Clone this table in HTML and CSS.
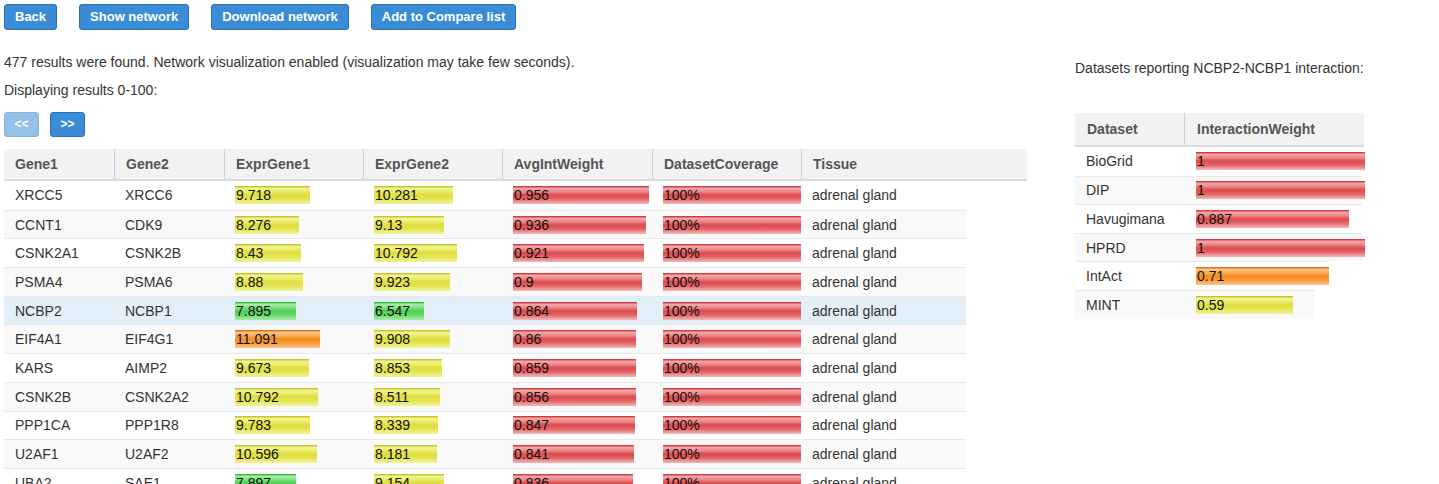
FILE: index.html
```html
<!DOCTYPE html>
<html>
<head>
<meta charset="utf-8">
<link rel="stylesheet" href="styles.css">
</head>
<body>
<div class="page">
  <div class="main">
    <div class="toolbar">
      <button class="btn">Back</button>
      <button class="btn">Show network</button>
      <button class="btn">Download network</button>
      <button class="btn">Add to Compare list</button>
    </div>
    <p class="info first">477 results were found. Network visualization enabled (visualization may take few seconds).</p>
    <p class="info">Displaying results 0-100:</p>
    <div class="pager">
      <button class="btn btn-sm disabled">&lt;&lt;</button>
      <button class="btn btn-sm">&gt;&gt;</button>
    </div>
    <div class="grid">
      <div class="thead">
        <div class="th">Gene1</div>
        <div class="th">Gene2</div>
        <div class="th">ExprGene1</div>
        <div class="th">ExprGene2</div>
        <div class="th">AvgIntWeight</div>
        <div class="th">DatasetCoverage</div>
        <div class="th">Tissue</div>
      </div>
      <div class="tbody">
        <div class="tr">
          <div class="td">XRCC5</div><div class="td">XRCC6</div>
          <div class="td"><div class="bar yellow" style="width:75px">9.718</div></div>
          <div class="td"><div class="bar yellow" style="width:79px">10.281</div></div>
          <div class="td"><div class="bar red" style="width:136px">0.956</div></div>
          <div class="td"><div class="bar red" style="width:138px">100%</div></div>
          <div class="td">adrenal gland</div>
        </div>
        <div class="tr">
          <div class="td">CCNT1</div><div class="td">CDK9</div>
          <div class="td"><div class="bar yellow" style="width:64px">8.276</div></div>
          <div class="td"><div class="bar yellow" style="width:70px">9.13</div></div>
          <div class="td"><div class="bar red" style="width:133px">0.936</div></div>
          <div class="td"><div class="bar red" style="width:138px">100%</div></div>
          <div class="td">adrenal gland</div>
        </div>
        <div class="tr">
          <div class="td">CSNK2A1</div><div class="td">CSNK2B</div>
          <div class="td"><div class="bar yellow" style="width:66px">8.43</div></div>
          <div class="td"><div class="bar yellow" style="width:83px">10.792</div></div>
          <div class="td"><div class="bar red" style="width:131px">0.921</div></div>
          <div class="td"><div class="bar red" style="width:138px">100%</div></div>
          <div class="td">adrenal gland</div>
        </div>
        <div class="tr">
          <div class="td">PSMA4</div><div class="td">PSMA6</div>
          <div class="td"><div class="bar yellow" style="width:68px">8.88</div></div>
          <div class="td"><div class="bar yellow" style="width:76px">9.923</div></div>
          <div class="td"><div class="bar red" style="width:129px">0.9</div></div>
          <div class="td"><div class="bar red" style="width:138px">100%</div></div>
          <div class="td">adrenal gland</div>
        </div>
        <div class="tr selected">
          <div class="td">NCBP2</div><div class="td">NCBP1</div>
          <div class="td"><div class="bar green" style="width:61px">7.895</div></div>
          <div class="td"><div class="bar green" style="width:50px">6.547</div></div>
          <div class="td"><div class="bar red" style="width:124px">0.864</div></div>
          <div class="td"><div class="bar red" style="width:138px">100%</div></div>
          <div class="td">adrenal gland</div>
        </div>
        <div class="tr">
          <div class="td">EIF4A1</div><div class="td">EIF4G1</div>
          <div class="td"><div class="bar orange" style="width:85px">11.091</div></div>
          <div class="td"><div class="bar yellow" style="width:76px">9.908</div></div>
          <div class="td"><div class="bar red" style="width:123px">0.86</div></div>
          <div class="td"><div class="bar red" style="width:138px">100%</div></div>
          <div class="td">adrenal gland</div>
        </div>
        <div class="tr">
          <div class="td">KARS</div><div class="td">AIMP2</div>
          <div class="td"><div class="bar yellow" style="width:74px">9.673</div></div>
          <div class="td"><div class="bar yellow" style="width:68px">8.853</div></div>
          <div class="td"><div class="bar red" style="width:123px">0.859</div></div>
          <div class="td"><div class="bar red" style="width:138px">100%</div></div>
          <div class="td">adrenal gland</div>
        </div>
        <div class="tr">
          <div class="td">CSNK2B</div><div class="td">CSNK2A2</div>
          <div class="td"><div class="bar yellow" style="width:83px">10.792</div></div>
          <div class="td"><div class="bar yellow" style="width:66px">8.511</div></div>
          <div class="td"><div class="bar red" style="width:123px">0.856</div></div>
          <div class="td"><div class="bar red" style="width:138px">100%</div></div>
          <div class="td">adrenal gland</div>
        </div>
        <div class="tr">
          <div class="td">PPP1CA</div><div class="td">PPP1R8</div>
          <div class="td"><div class="bar yellow" style="width:75px">9.783</div></div>
          <div class="td"><div class="bar yellow" style="width:64px">8.339</div></div>
          <div class="td"><div class="bar red" style="width:122px">0.847</div></div>
          <div class="td"><div class="bar red" style="width:138px">100%</div></div>
          <div class="td">adrenal gland</div>
        </div>
        <div class="tr">
          <div class="td">U2AF1</div><div class="td">U2AF2</div>
          <div class="td"><div class="bar yellow" style="width:82px">10.596</div></div>
          <div class="td"><div class="bar yellow" style="width:63px">8.181</div></div>
          <div class="td"><div class="bar red" style="width:121px">0.841</div></div>
          <div class="td"><div class="bar red" style="width:138px">100%</div></div>
          <div class="td">adrenal gland</div>
        </div>
        <div class="tr">
          <div class="td">UBA2</div><div class="td">SAE1</div>
          <div class="td"><div class="bar green" style="width:61px">7.897</div></div>
          <div class="td"><div class="bar yellow" style="width:70px">9.154</div></div>
          <div class="td"><div class="bar red" style="width:120px">0.836</div></div>
          <div class="td"><div class="bar red" style="width:138px">100%</div></div>
          <div class="td">adrenal gland</div>
        </div>
      </div>
    </div>
  </div>
  <aside class="side">
    <p class="info side-title">Datasets reporting NCBP2-NCBP1 interaction:</p>
    <div class="rgrid">
      <div class="rhead">
        <div class="th">Dataset</div>
        <div class="th">InteractionWeight</div>
      </div>
      <div class="rbody">
        <div class="rr">
          <div class="td">BioGrid</div>
          <div class="td"><div class="bar red" style="width:169px">1</div></div>
        </div>
        <div class="rr">
          <div class="td">DIP</div>
          <div class="td"><div class="bar red" style="width:169px">1</div></div>
        </div>
        <div class="rr">
          <div class="td">Havugimana</div>
          <div class="td"><div class="bar red" style="width:153px">0.887</div></div>
        </div>
        <div class="rr">
          <div class="td">HPRD</div>
          <div class="td"><div class="bar red" style="width:169px">1</div></div>
        </div>
        <div class="rr rr-mid">
          <div class="td">IntAct</div>
          <div class="td"><div class="bar orange" style="width:133px">0.71</div></div>
        </div>
        <div class="rr rr-short">
          <div class="td">MINT</div>
          <div class="td"><div class="bar yellow" style="width:97px">0.59</div></div>
        </div>
      </div>
    </div>
  </aside>
</div>
</body>
</html>
```

FILE: styles.css
```css
html, body {
  margin: 0;
  padding: 0;
  background: #fff;
}

body {
  font-family: "Liberation Sans", Arial, sans-serif;
  font-size: 14px;
  color: #333;
  padding: 4px;
  overflow: hidden;
}

.page {
  display: flex;
  gap: 48px;
  align-items: flex-start;
}

.main {
  width: 1023px;
  flex: none;
}

.toolbar {
  display: flex;
  gap: 22px;
}

.btn {
  height: 26px;
  padding: 0 10px;
  border: 1px solid #2c71b3;
  border-radius: 3px;
  background: #3a8dd4;
  color: #fff;
  font-family: "Liberation Sans", Arial, sans-serif;
  font-size: 13px;
  font-weight: bold;
  line-height: 24px;
  cursor: pointer;
}

.btn-sm {
  width: 35px;
  height: 25px;
  padding: 0;
  font-size: 12px;
  line-height: 23px;
}

.btn.disabled {
  background: #93c1e8;
  border-color: #86b5df;
}

.info {
  margin: 8px 0 0;
  line-height: 20px;
}

.info.first {
  margin-top: 22px;
}

.pager {
  display: flex;
  gap: 11px;
  margin-top: 12px;
}

.grid {
  margin-top: 12px;
}

.thead {
  display: grid;
  grid-template-columns: 110px 110px 139px 139px 150px 149px 226px;
  height: 32px;
  background: #f2f2f2;
  border-bottom: 2px solid #dcdcdc;
  box-sizing: border-box;
}

.th {
  display: flex;
  align-items: center;
  padding-left: 11px;
  font-weight: bold;
  color: #555;
  white-space: nowrap;
}

.thead .th + .th,
.rhead .th + .th {
  border-left: 1px solid #cfcfcf;
}

.tr {
  display: grid;
  grid-template-columns: 110px 110px 139px 139px 150px 149px 165px;
  height: 28.7px;
  align-items: center;
  box-sizing: border-box;
  border-top: 1px solid #e8e8e8;
  width: max-content;
}

.tbody .tr:first-child {
  border-top: none;
}

.tbody .tr:nth-child(even) {
  background: #f9f9f9;
}

.tbody .tr.selected {
  background: #e2eef8;
}

.td {
  padding-left: 11px;
  white-space: nowrap;
}

.bar {
  height: 18px;
  line-height: 18px;
  padding-left: 1px;
  box-sizing: border-box;
  color: #111;
  font-size: 14px;
  white-space: nowrap;
}

.bar.red {
  background: linear-gradient(to bottom, #d63d40 0, #d63d40 1px, #f3aaab 2px, #ec8b8c 30%, #dc4a4d 50%, #e36366 72%, #f4b9ba 100%);
}

.bar.yellow {
  background: linear-gradient(to bottom, #c7c72a 0, #c7c72a 1px, #f3f39a 2px, #ecec6e 30%, #dede3c 50%, #e4e455 72%, #f2f29c 100%);
}

.bar.green {
  background: linear-gradient(to bottom, #39bd3b 0, #39bd3b 1px, #aaeeab 2px, #84e286 30%, #4fcf52 50%, #66d868 72%, #a9eda9 100%);
}

.bar.orange {
  background: linear-gradient(to bottom, #dc7416 0, #dc7416 1px, #fcc58a 2px, #fbae5c 30%, #f58d22 50%, #f79a3a 72%, #fcc48a 100%);
}

/* side panel */
.side {
  flex: none;
}

.side-title {
  margin-top: 54px;
}

.rgrid {
  margin-top: 35px;
}

.rhead {
  display: grid;
  grid-template-columns: 109px 178px;
  height: 34px;
  background: #f2f2f2;
  border-bottom: 2px solid #dcdcdc;
  box-sizing: border-box;
}

.rhead .th {
  padding-left: 12px;
}

.rr {
  display: grid;
  grid-template-columns: 109px 178px;
  height: 28.6px;
  align-items: center;
  box-sizing: border-box;
  border-top: 1px solid #e8e8e8;
  width: 287px;
}

.rbody .rr:first-child {
  border-top: none;
}

.rbody .rr:nth-child(even) {
  background: #f9f9f9;
}

.rr.rr-mid {
  width: 254px;
}

.rr.rr-short {
  width: 240px;
}

.rr .td {
  padding-left: 11px;
}

.rr .td + .td {
  padding-left: 12px;
}
```
